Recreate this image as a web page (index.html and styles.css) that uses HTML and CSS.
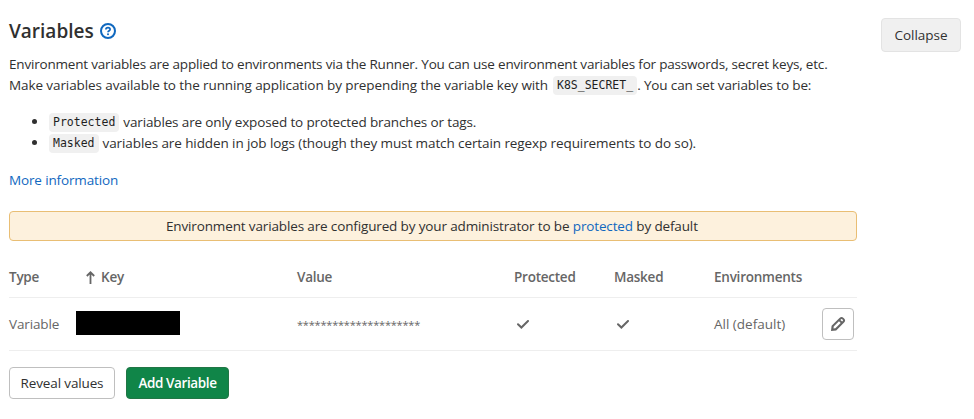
FILE: index.html
```html
<!DOCTYPE html>
<html lang="en">
<head>
<meta charset="utf-8">
<title>Variables</title>
<link rel="stylesheet" href="styles.css">
</head>
<body>
<section class="settings">
  <header class="settings-header">
    <div class="intro">
      <h4 class="title"><span>Variables</span>
        <svg class="help" viewBox="0 0 16 16" width="16" height="16" fill="none" stroke="currentColor" stroke-width="2"><circle cx="8" cy="8" r="7"/><path d="M5.9 6.6C5.9 5.3 6.8 4.7 8 4.7s2.1.7 2.1 1.8C10.100 7.700 8 7.700 8 9.300" stroke-width="1.700"/><circle cx="8" cy="11.300" r="1" fill="currentColor" stroke="none"/></svg>
      </h4>
      <p class="text line-one">Environment variables are applied to environments via the Runner. You can use environment variables for passwords, secret keys, etc.</p>
      <p class="text line-two"><span class="make">Make variables available to the running application by prepending the variable key with</span><code>K8S_SECRET_</code><span class="set">. You can set variables to be:</span></p>
      <ul class="kinds">
        <li><code>Protected</code><span class="kind-protected">variables are only exposed to protected branches or tags.</span></li>
        <li><code>Masked</code><span class="kind-masked">variables are hidden in job logs (though they must match certain regexp requirements to do so).</span></li>
      </ul>
      <p class="text"><a class="more" href="#">More information</a></p>
    </div>
    <button class="btn collapse"><span>Collapse</span></button>
  </header>
  <div class="content">
    <div class="alert"><span>Environment variables are configured by your administrator to be <a href="#">protected</a> by default</span></div>
    <div class="table">
      <div class="row head">
        <span>Type</span>
        <span class="key"><svg viewBox="0 0 9 13" width="9" height="13" fill="none" stroke="currentColor" stroke-width="1.800"><path d="M4.500 13V1.500M.8 5 4.500 1.300 8.200 5"/></svg>Key</span>
        <span>Value</span><span>Protected</span><span>Masked</span><span>Environments</span><span></span>
      </div>
      <div class="row body">
        <span class="type">Variable</span>
        <span class="redacted"></span>
        <span class="stars">*********************</span>
        <span class="check"><svg viewBox="0 0 12 9" width="12" height="9" fill="none" stroke="currentColor" stroke-width="2"><path d="M1 4.200 4.400 7.500 11 1" stroke-linecap="round"/></svg></span>
        <span class="check"><svg viewBox="0 0 12 9" width="12" height="9" fill="none" stroke="currentColor" stroke-width="2"><path d="M1 4.200 4.400 7.500 11 1" stroke-linecap="round"/></svg></span>
        <span class="env">All (default)</span>
        <button class="btn edit" aria-label="Edit"><svg viewBox="0 0 16 16" width="16" height="16"><path fill="currentColor" fill-rule="evenodd" d="M1 15l.6-5.200 7.900-7.900a2.900 2.900 0 0 1 4.100 0l.5.500a2.900 2.900 0 0 1 0 4.100l-7.900 7.900L1 15zm2.500-2.500 1.900-.2 5.300-5.300-1.700-1.700-5.300 5.300-.2 1.900zM12.100 5.600l.6-.6a.9.9 0 0 0 0-1.200l-.5-.5a.9.9 0 0 0-1.200 0l-.6.6 1.700 1.700z"/></svg></button>
      </div>
    </div>
    <div class="actions">
      <button class="btn reveal"><span>Reveal values</span></button>
      <button class="btn add"><span>Add Variable</span></button>
    </div>
  </div>
</section>
</body>
</html>
```

FILE: styles.css
```css
* { box-sizing: border-box; }
body {
  margin: 0;
  background: #fff;
  color: #303030;
  font: 13.5px/21px "Open Sans", "Noto Sans", sans-serif;
  letter-spacing: -0.14px;
}
a { color: #1068bf; text-decoration: none; }
p, h4, ul { margin: 0; padding: 0; }
span { white-space: nowrap; }
.settings { padding: 18px 13px 0 9px; }
.settings-header { display: flex; justify-content: space-between; align-items: flex-start; height: 193px; }
.intro { width: 848px; }
.title { display: flex; align-items: center; gap: 6px; height: 26px; margin-bottom: 10px; font-size: 19px; font-weight: 600; letter-spacing: 0; }
.help { color: #1068bf; }
.text { white-space: nowrap; height: 21px; }
.line-one { letter-spacing: -0.19px; }
.make, .kind-masked { letter-spacing: -0.095px; }
code {
  display: inline-block;
  height: 19px;
  padding: 0 4px;
  border-radius: 4px;
  background: #f0f0f0;
  color: #1f1f1f;
  font: 11.5px/19px "DejaVu Sans Mono", monospace;
  letter-spacing: 0;
}
.line-two, .kinds li { display: flex; align-items: center; }
.line-two code { margin-left: 5px; }
.kinds { list-style: none; margin: 16px 0; }
.kinds li { height: 21px; padding-left: 23px; }
.kinds li::before { content: ""; width: 5px; height: 5px; margin: -2px 12px 0 0; border-radius: 50%; background: #303030; }
.kinds code { margin-right: 4px; }
.btn {
  display: inline-flex;
  align-items: center;
  justify-content: center;
  height: 32px;
  padding: 0;
  border: 1px solid #bfbfbf;
  border-radius: 4px;
  background: #fff;
  color: #303030;
  font: inherit;
  letter-spacing: inherit;
}
.collapse { width: 80px; height: 34px; background: #f0f0f0; border-color: #e3e3e3; letter-spacing: 0; }
.content { width: 848px; }
.alert { height: 30px; display: flex; align-items: center; padding-left: 156px; border: 1px solid #e9be74; border-radius: 4px; background: #fdf1dd; }
.table { margin-top: 16px; color: #666; }
.row { display: grid; grid-template-columns: 67px 221px 217px 100px 100px 108px 32px; align-items: center; border-bottom: 1px solid #eee; }
.head { height: 41px; font-weight: 600; letter-spacing: -0.24px; }
.body { height: 53px; }
.key { display: flex; align-items: center; gap: 6px; padding-left: 10px; }
.redacted { width: 104px; height: 24px; background: #000; margin-top: -2px; }
.stars { font-size: 11px; letter-spacing: -0.2px; }
.check { display: flex; padding-left: 3px; }
.env { letter-spacing: 0; }
.edit { width: 32px; color: #666; }
.actions { display: flex; gap: 11px; padding-top: 16px; }
.reveal { width: 106px; }
.add { width: 103px; background: #108548; border-color: #217645; color: #fff; font-weight: 600; letter-spacing: -0.4px; }
```
